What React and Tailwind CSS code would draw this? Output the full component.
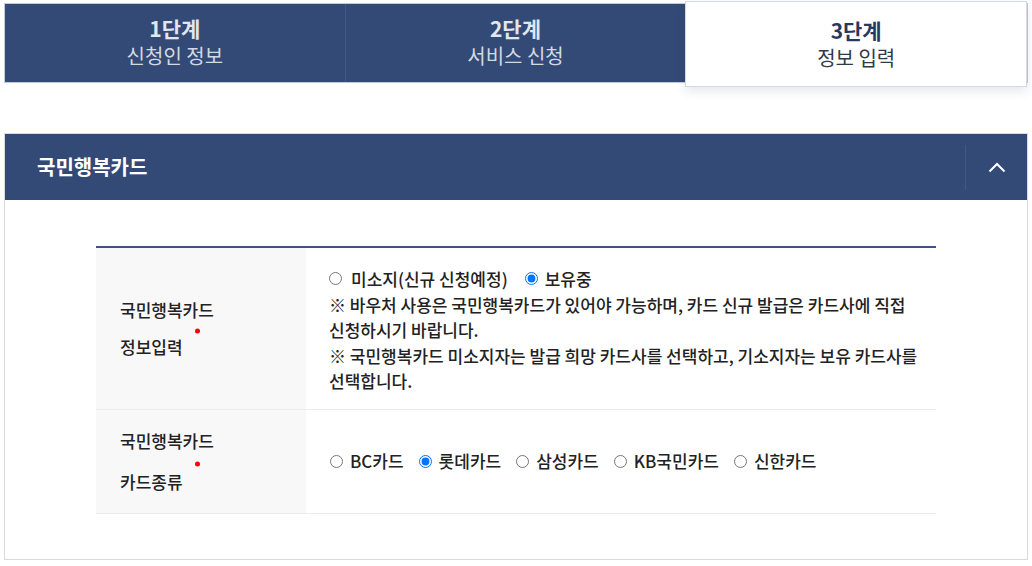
import React from "react";

const font = { fontFamily: '"Noto Sans CJK KR", "Noto Sans", sans-serif' };

const steps = [
  { no: "1단계", title: "신청인 정보" },
  { no: "2단계", title: "서비스 신청" },
  { no: "3단계", title: "정보 입력", active: true },
];

const cards = ["BC카드", "롯데카드", "삼성카드", "KB국민카드", "신한카드"];

const Radio = ({ name, checked, label, gap = "ml-[9px]" }) => (
  <label className="flex items-center">
    <input
      type="radio"
      name={name}
      defaultChecked={checked}
      className="m-0 h-[13px] w-[13px]"
    />
    <span className={gap}>{label}</span>
  </label>
);

const Label = ({ first, second, spacing }) => (
  <div className="relative flex flex-col text-[17px] font-medium leading-[22px] text-[#222]">
    <span>{first}</span>
    <span className={spacing}>{second}</span>
    <span className="absolute left-[75px] top-[calc(50%+3px)] h-[5px] w-[5px] -translate-y-1/2 rounded-full bg-[#ff0000]" />
  </div>
);

const App = () => {
  return (
    <div className="min-h-[566px] w-full bg-white px-[4px]" style={font}>
      {/* steps */}
      <div className="mt-[3px] flex h-[80px] border border-[#c3cbd9] bg-[#334a76]">
        {steps.map((s, i) =>
          s.active ? (
            <div
              key={s.no}
              className="relative z-10 -mt-[3px] flex h-[86px] flex-1 flex-col items-center justify-center border border-[#d3d9e3] bg-white shadow-[0_4px_10px_rgba(30,50,90,0.12)]"
            >
              <span className="text-[21px] font-bold leading-[27px] text-[#26395f]">{s.no}</span>
              <span className="text-[20px] leading-[27px] text-[#2f3a4d]">{s.title}</span>
            </div>
          ) : (
            <div
              key={s.no}
              className={`flex flex-1 flex-col items-center justify-center pb-[3px] ${i === 0 ? "border-r border-[#40588a]" : ""}`}
            >
              <span className="text-[21px] font-bold leading-[27px] text-[#e2e6ed]">{s.no}</span>
              <span className="text-[20px] leading-[27px] text-[#d3d9e3]">{s.title}</span>
            </div>
          )
        )}
      </div>

      {/* panel */}
      <div className="mt-[50px] border border-[#dadada]">
        <div className="flex h-[66px] items-center bg-[#334a76]">
          <h2 className="flex-1 pl-[32px] text-[20px] font-bold text-white">국민행복카드</h2>
          <div className="h-[45px] w-px bg-[#40588a]" />
          <button className="flex h-full w-[61px] items-center justify-center">
            <svg width="18" height="11" viewBox="0 0 18 11" fill="none">
              <path d="M1.5 9.5L9 2l7.5 7.5" stroke="white" strokeWidth="2" />
            </svg>
          </button>
        </div>

        <div className="px-[91px] pb-[45px] pt-[46px]">
          <div className="border-t-2 border-[#3b5282]">
            <div className="flex border-b border-[#ececec]">
              <div className="flex w-[210px] items-center bg-[#f8f8f8] pl-[24px]">
                <Label first="국민행복카드" second="정보입력" spacing="mt-[15px]" />
              </div>
              <div className="flex-1 pb-[15px] pt-[18px] pl-[23px] text-[17px] font-medium leading-[25.5px] text-[#222]">
                <div className="flex items-center">
                  <Radio name="own" label="미소지(신규 신청예정)" />
                  <span className="w-[17px]" />
                  <Radio name="own" label="보유중" checked gap="ml-[7px]" />
                </div>
                <p className="whitespace-nowrap">
                  ※ 바우처 사용은 국민행복카드가 있어야 가능하며, 카드 신규 발급은 카드사에 직접
                  <br />
                  신청하시기 바랍니다.
                </p>
                <p className="whitespace-nowrap">
                  ※ 국민행복카드 미소지자는 발급 희망 카드사를 선택하고, 기소지자는 보유 카드사를
                  <br />
                  선택합니다.
                </p>
              </div>
            </div>

            <div className="flex border-b border-[#ececec]">
              <div className="flex h-[103px] w-[210px] items-center bg-[#f8f8f8] pl-[24px]">
                <Label first="국민행복카드" second="카드종류" spacing="mt-[19px]" />
              </div>
              <div className="flex flex-1 items-center gap-[15px] pl-[24px] text-[17px] font-medium text-[#222]">
                {cards.map((c, i) => (
                  <Radio key={c} name="card" label={c} checked={i === 1} gap="ml-[7px]" />
                ))}
              </div>
            </div>
          </div>
        </div>
      </div>
    </div>
  );
};

export default App;
